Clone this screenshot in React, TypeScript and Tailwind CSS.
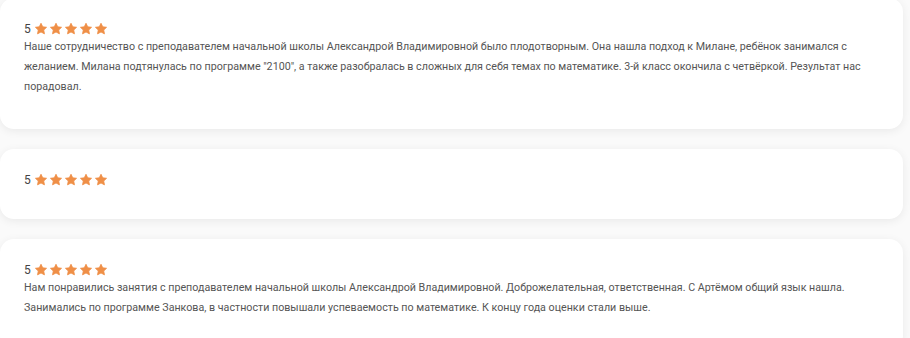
import React, { FC } from "react";

const reviews = [
  {
    rating: 5,
    text: 'Наше сотрудничество с преподавателем начальной школы Александрой Владимировной было плодотворным. Она нашла подход к Милане, ребёнок занимался с желанием. Милана подтянулась по программе "2100", а также разобралась в сложных для себя темах по математике. 3-й класс окончила с четвёркой. Результат нас порадовал.',
  },
  { rating: 5, text: "" },
  {
    rating: 5,
    text: "Нам понравились занятия с преподавателем начальной школы Александрой Владимировной. Доброжелательная, ответственная. С Артёмом общий язык нашла. Занимались по программе Занкова, в частности повышали успеваемость по математике. К концу года оценки стали выше.",
  },
];

const Star: FC = () => (
  <svg viewBox="0 0 24 24" className="w-[14px] h-[14px]" fill="#ef8f47">
    <path d="M12 2.2l2.9 6.1 6.6.8-4.9 4.6 1.3 6.6L12 17l-5.9 3.3 1.3-6.6-4.9-4.6 6.6-.8z" strokeLinejoin="round" stroke="#ef8f47" strokeWidth="1.5" />
  </svg>
);

const App: FC = () => {
  return (
    <div className="min-h-screen bg-[#fafafa] font-['Roboto',sans-serif] pr-[7px]">
      <div className="flex flex-col gap-5 -mt-[2px]">
        {reviews.map((r, i) => (
          <div
            key={i}
            className="bg-white rounded-[14px] shadow-[0_2px_10px_rgba(0,0,0,0.07)] px-6 pt-6 pb-8"
          >
            {/* rating */}
            <div className="flex items-center h-[14px] gap-[1px]">
              <span className="text-[12px] text-[#444] mr-[2px]">{r.rating}</span>
              {[0, 1, 2, 3, 4].map((s) => (
                <Star key={s} />
              ))}
            </div>
            {r.text && (
              <p className="text-[10.7px] leading-[20px] text-[#555] mt-[1px]">{r.text}</p>
            )}
          </div>
        ))}
      </div>
    </div>
  );
};

export default App;
